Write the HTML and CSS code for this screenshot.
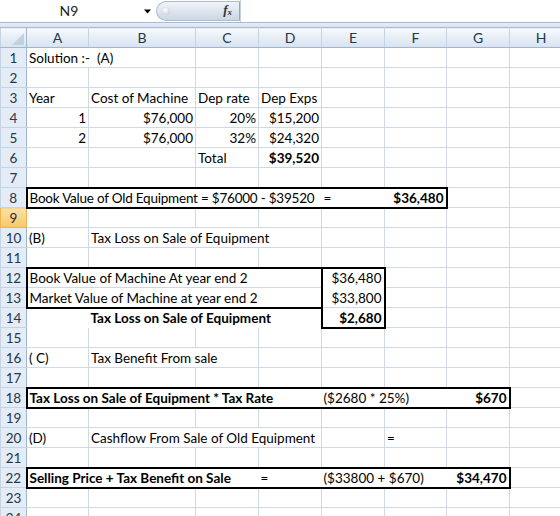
FILE: index.html
```html
<!DOCTYPE html>
<html lang="en">
<head>
  <meta charset="UTF-8" />
  <title>Old Equipment - Book1</title>
  <link rel="stylesheet" href="styles.css">
</head>
<body>

<div class="formula-bar">
  <div class="name-box">N9</div>
  <div class="name-drop">
    <svg width="9" height="5" viewBox="0 0 9 5"><path d="M1 0.5 H8 L4.5 4.5 Z" fill="#000"/></svg>
  </div>
  <div class="fx-pill">
    <span class="pill-dot"></span>
    <span class="fx">f<sub>x</sub></span>
  </div>
  <div class="formula-input"></div>
</div>
<div class="bar-gap"></div>

<table class="sheet">
  <colgroup>
    <col class="c-head"><col class="c-a"><col class="c-b"><col class="c-c"><col class="c-d">
    <col class="c-e"><col class="c-f"><col class="c-g"><col class="c-h">
  </colgroup>
  <thead>
    <tr>
      <th class="corner"><span class="tri"></span></th>
      <th>A</th><th>B</th><th>C</th><th>D</th><th>E</th><th>F</th><th>G</th><th>H</th>
    </tr>
  </thead>
  <tbody>
    <tr><th>1</th><td colspan="2">Solution :-&nbsp; (A)</td><td></td><td></td><td></td><td></td><td></td><td></td></tr>
    <tr><th>2</th><td></td><td></td><td></td><td></td><td></td><td></td><td></td><td></td></tr>
    <tr><th>3</th><td>Year</td><td>Cost of Machine</td><td>Dep rate</td><td>Dep Exps</td><td></td><td></td><td></td><td></td></tr>
    <tr><th>4</th><td class="r">1</td><td class="r">$76,000</td><td class="r">20%</td><td class="r">$15,200</td><td></td><td></td><td></td><td></td></tr>
    <tr><th>5</th><td class="r">2</td><td class="r">$76,000</td><td class="r">32%</td><td class="r">$24,320</td><td></td><td></td><td></td><td></td></tr>
    <tr><th>6</th><td></td><td></td><td>Total</td><td class="r b">$39,520</td><td></td><td></td><td></td><td></td></tr>
    <tr><th>7</th><td></td><td></td><td></td><td></td><td></td><td></td><td></td><td></td></tr>
    <tr><th>8</th><td colspan="4" class="tight bt bb bl nr">Book Value of Old Equipment = $76000 - $39520</td><td class="bt bb nl nr">=</td><td class="r b bt bb br nl">$36,480</td><td></td><td></td></tr>
    <tr class="sel"><th>9</th><td></td><td></td><td></td><td></td><td></td><td></td><td></td><td></td></tr>
    <tr><th>10</th><td>(B)</td><td colspan="3">Tax Loss on Sale of Equipment</td><td></td><td></td><td></td><td></td></tr>
    <tr><th>11</th><td></td><td></td><td></td><td></td><td></td><td></td><td></td><td></td></tr>
    <tr><th>12</th><td colspan="4" class="bt bl">Book Value of Machine At year end 2</td><td class="r bt bl br nb">$36,480</td><td></td><td></td><td></td></tr>
    <tr><th>13</th><td colspan="4" class="bb bl">Market Value of Machine at year end 2</td><td class="r bl br">$33,800</td><td></td><td></td><td></td></tr>
    <tr><th>14</th><td class="nr nb"></td><td colspan="3" class="b nb">Tax Loss on Sale of Equipment</td><td class="r b bl br bb">$2,680</td><td></td><td></td><td></td></tr>
    <tr><th>15</th><td></td><td></td><td></td><td></td><td></td><td></td><td></td><td></td></tr>
    <tr><th>16</th><td>( C)</td><td colspan="2">Tax Benefit From sale</td><td></td><td></td><td></td><td></td><td></td></tr>
    <tr><th>17</th><td></td><td></td><td></td><td></td><td></td><td></td><td></td><td></td></tr>
    <tr><th>18</th><td colspan="4" class="b bt bb bl nr">Tax Loss on Sale of Equipment * Tax Rate</td><td colspan="2" class="bt bb nl nr">($2680 * 25%)</td><td class="r b bt bb br nl">$670</td><td></td></tr>
    <tr><th>19</th><td></td><td></td><td></td><td></td><td></td><td></td><td></td><td></td></tr>
    <tr><th>20</th><td>(D)</td><td colspan="3">Cashflow From Sale of Old Equipment</td><td></td><td>=</td><td></td><td></td></tr>
    <tr><th>21</th><td></td><td></td><td></td><td></td><td></td><td></td><td></td><td></td></tr>
    <tr><th>22</th><td colspan="3" class="b bt bb bl nr">Selling Price + Tax Benefit on Sale</td><td class="bt bb nl nr">=</td><td colspan="2" class="bt bb nl nr">($33800 + $670)</td><td class="r b bt bb br nl">$34,470</td><td></td></tr>
    <tr><th>23</th><td></td><td></td><td></td><td></td><td></td><td></td><td></td><td></td></tr>
    <tr><th>24</th><td></td><td></td><td></td><td></td><td></td><td></td><td></td><td></td></tr>
  </tbody>
</table>

</body>
</html>
```

FILE: styles.css
```css
body {
  margin: 0;
  width: 560px;
  height: 516px;
  overflow: hidden;
  background: #fff;
  font-family: Lato, "Liberation Sans", sans-serif;
  font-size: 13.5px;
  color: #000;
}

/* formula bar */
.formula-bar {
  display: flex;
  height: 22px;
  border-bottom: 1px solid #a7bad3;
  background: #fff;
}
.name-box {
  width: 138px;
  text-align: center;
  line-height: 22px;
  font-size: 14px;
  color: #222;
}
.name-drop {
  width: 18px;
  display: flex;
  align-items: center;
  padding-left: 5px;
  box-sizing: border-box;
}
.fx-pill {
  width: 84px;
  height: 20px;
  margin-top: 1px;
  position: relative;
  border: 1px solid #aebdd0;
  border-right-color: #96a8bf;
  border-radius: 11px 0 0 11px;
  background: linear-gradient(#f1f5fa, #dbe3ed 55%, #ccd6e3);
  box-sizing: border-box;
}
.pill-dot {
  position: absolute;
  left: 5px;
  top: 5px;
  width: 8px;
  height: 8px;
  border-radius: 50%;
  background: radial-gradient(circle at 40% 35%, #ffffff, #b9c4d2);
}
.fx {
  position: absolute;
  right: 7px;
  top: 0;
  font-family: "Liberation Serif", serif;
  font-style: italic;
  font-weight: bold;
  font-size: 13px;
  color: #333;
}
.fx sub {
  font-size: 9px;
  vertical-align: -1px;
}
.formula-input {
  flex: 1;
  border-left: 1px solid #c4d0de;
}
.bar-gap {
  height: 4px;
  background: linear-gradient(#e6edf6, #d9e3ef);
}

/* sheet grid */
.sheet {
  border-collapse: collapse;
  table-layout: fixed;
  width: 572px;
}
.c-head { width: 26px; }
.c-a { width: 62px; }
.c-b { width: 107px; }
.c-c { width: 63px; }
.c-d { width: 63px; }
.c-e { width: 63px; }
.c-f { width: 62px; }
.c-g { width: 63px; }
.c-h { width: 63px; }

.sheet tr {
  height: 20px;
}
.sheet th {
  font-weight: normal;
  font-size: 14px;
  color: #27364a;
  padding: 0;
  text-align: center;
  border: 1px solid #9eb6ce;
  background: #e4ecf7;
}
.sheet thead th {
  background: linear-gradient(#f8fafd, #e6edf6 50%, #d9e3ef);
  border-color: #c5d3e3;
  border-top-color: #a7bad3;
  border-bottom-color: #9eb6ce;
}
.sheet tbody th {
  border-color: #c5d3e3;
  border-right-color: #9eb6ce;
  font-size: 13.5px;
}
.sheet .corner {
  position: relative;
  border-right-color: #9eb6ce;
}
.tri {
  position: absolute;
  right: 2px;
  bottom: 2px;
  width: 0;
  height: 0;
  border-left: 12px solid transparent;
  border-bottom: 12px solid #c3d0e0;
}
.sheet tr.sel th {
  background: linear-gradient(#fae1a8, #f6c86a);
  border-color: #f2b34c;
  color: #1f2a38;
}

.sheet td {
  border: 1px solid #d0d7e5;
  padding: 0 2px 0 2px;
  white-space: nowrap;
  overflow: visible;
  vertical-align: bottom;
  line-height: 18px;
}
.r { text-align: right; }
.b { font-weight: bold; }
.tight { letter-spacing: -0.22px; }

/* heavy outlines */
.sheet td.bt { border-top: 2px solid #000; }
.sheet td.bb { border-bottom: 2px solid #000; }
.sheet td.bl { border-left: 2px solid #000; }
.sheet td.br { border-right: 2px solid #000; }
.sheet td.nl { border-left-style: hidden; }
.sheet td.nr { border-right-style: hidden; }
.sheet td.nb { border-bottom-color: #fff; }
```
